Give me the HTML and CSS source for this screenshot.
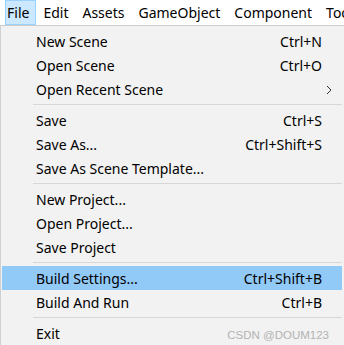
FILE: index.html
```html
<!DOCTYPE html>
<html lang="en">
<head>
    <meta charset="UTF-8">
    <title>File menu</title>
    <link rel="stylesheet" href="styles.css">
</head>
<body>
    <div class="menubar">
        <span class="menubar-item ativo">File</span>
        <span class="menubar-item">Edit</span>
        <span class="menubar-item">Assets</span>
        <span class="menubar-item">GameObject</span>
        <span class="menubar-item">Component</span>
        <span class="menubar-item">Tools</span>
    </div>

    <div class="menu">
        <div class="menu-item"><span>New Scene</span><span>Ctrl+N</span></div>
        <div class="menu-item"><span>Open Scene</span><span>Ctrl+O</span></div>
        <div class="menu-item sub">
            <span>Open Recent Scene</span>
            <svg class="seta" viewBox="0 0 6 10" xmlns="http://www.w3.org/2000/svg">
                <path d="M1 1 L5 5 L1 9" fill="none" stroke="#333" stroke-width="1"/>
            </svg>
        </div>
        <div class="sep"></div>
        <div class="menu-item"><span>Save</span><span>Ctrl+S</span></div>
        <div class="menu-item"><span>Save As...</span><span>Ctrl+Shift+S</span></div>
        <div class="menu-item"><span>Save As Scene Template...</span></div>
        <div class="sep"></div>
        <div class="menu-item"><span>New Project...</span></div>
        <div class="menu-item"><span>Open Project...</span></div>
        <div class="menu-item"><span>Save Project</span></div>
        <div class="sep"></div>
        <div class="menu-item hover"><span>Build Settings...</span><span>Ctrl+Shift+B</span></div>
        <div class="menu-item"><span>Build And Run</span><span>Ctrl+B</span></div>
        <div class="sep"></div>
        <div class="menu-item"><span>Exit</span></div>

        <span class="marca">CSDN @DOUM123</span>
    </div>
</body>
</html>
```

FILE: styles.css
```css
body {
    margin: 0;
    padding: 0;
    width: 344px;
    height: 345px;
    overflow: hidden;
    background-color: #f2f2f2;
    font-family: 'Noto Sans', sans-serif;
    font-size: 14px;
    color: #000000;
}

.menubar {
    display: flex;
    height: 25px;
    align-items: center;
    background-color: #ffffff;
    white-space: nowrap;
}

.menubar-item {
    padding: 0 7px;
    line-height: 23px;
}

.menubar-item.ativo {
    margin-left: 5px;
    padding: 0 6px 0 1px;
    background-color: #cce8ff;
    border: 1px solid #99d1ff;
}

.menu {
    position: relative;
    height: 319px;
    border-top: 1px solid #cccccc;
    border-left: 1px solid #d0d0d0;
    padding: 3px 2px 0 1px;
    background-color: #f2f2f2;
}

.menu-item {
    position: relative;
    display: flex;
    justify-content: space-between;
    align-items: center;
    height: 24px;
    padding: 0 20px 0 34px;
}

.menu-item.hover {
    background-color: #91c9f7;
}

.seta {
    position: absolute;
    right: 10px;
    top: 8px;
    width: 6px;
    height: 10px;
}

.sep {
    height: 1px;
    margin: 3px 0 3px 31px;
    background-color: #d7d7d7;
}

.marca {
    position: absolute;
    right: 15px;
    bottom: 7px;
    font-family: 'Liberation Sans', sans-serif;
    font-size: 11.5px;
    color: #b3b3b3;
}
```
